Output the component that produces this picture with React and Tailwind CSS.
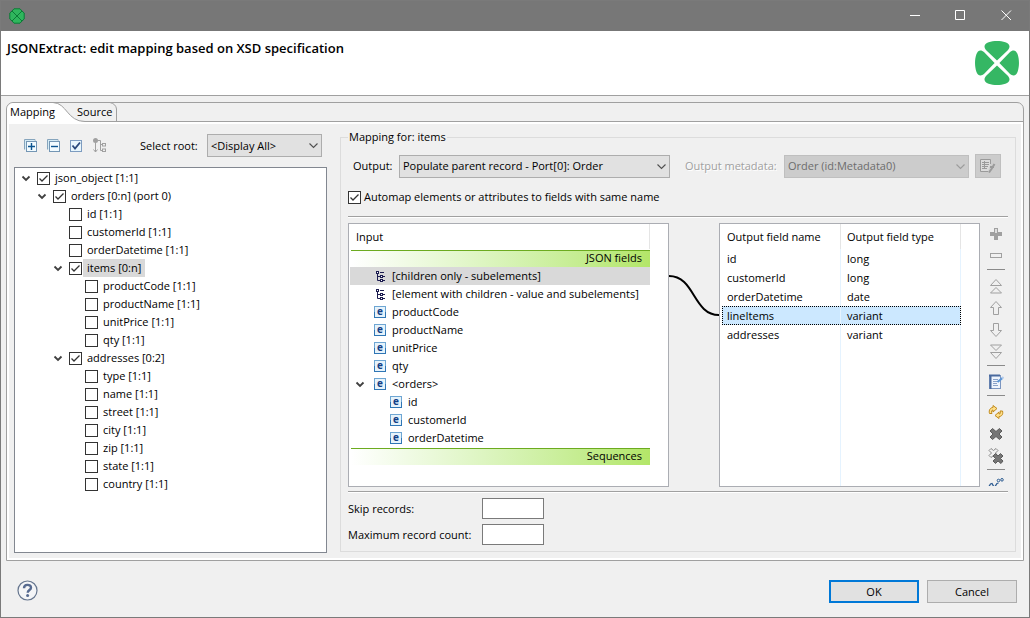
import React, { useState } from 'react';

const TREE = {
  label: 'json_object [1:1]',
  checked: true,
  children: [
    {
      label: 'orders [0:n] (port 0)',
      checked: true,
      children: [
        { label: 'id [1:1]' },
        { label: 'customerId [1:1]' },
        { label: 'orderDatetime [1:1]' },
        {
          label: 'items [0:n]',
          checked: true,
          selected: true,
          children: [
            { label: 'productCode [1:1]' },
            { label: 'productName [1:1]' },
            { label: 'unitPrice [1:1]' },
            { label: 'qty [1:1]' },
          ],
        },
        {
          label: 'addresses [0:2]',
          checked: true,
          children: [
            { label: 'type [1:1]' },
            { label: 'name [1:1]' },
            { label: 'street [1:1]' },
            { label: 'city [1:1]' },
            { label: 'zip [1:1]' },
            { label: 'state [1:1]' },
            { label: 'country [1:1]' },
          ],
        },
      ],
    },
  ],
};

const INPUT_FIELDS = [
  { label: '[children only - subelements]', icon: 'sub', selected: true },
  { label: '[element with children - value and subelements]', icon: 'sub' },
  { label: 'productCode' },
  { label: 'productName' },
  { label: 'unitPrice' },
  { label: 'qty' },
  { label: '<orders>', open: true },
  { label: 'id', nested: true },
  { label: 'customerId', nested: true },
  { label: 'orderDatetime', nested: true },
];

const OUTPUT_FIELDS = [
  { name: 'id', type: 'long' },
  { name: 'customerId', type: 'long' },
  { name: 'orderDatetime', type: 'date' },
  { name: 'lineItems', type: 'variant', selected: true },
  { name: 'addresses', type: 'variant' },
];

/* ---------- icons ---------- */

const PETAL = 'M22 19.6 L11.2 9.2 C8 5.6 9.6 2.6 13.6 1.3 C18.6 -0.4 25.4 -0.4 30.4 1.3 C34.4 2.6 36 5.6 32.8 9.2 Z';

function Clover() {
  return (
    <svg className="w-11 h-11 shrink-0" viewBox="0 0 44 44" fill="#35b764">
      {[0, 90, 180, 270].map((a) => (
        <path key={a} d={PETAL} transform={`rotate(${a} 22 22)`} />
      ))}
    </svg>
  );
}

function AppIcon() {
  return (
    <svg className="w-4 h-4" viewBox="0 0 16 16" fill="#2fb65d" stroke="#0b7a36">
      <path d="M5 .8h6l2 2.2 2.2 2v6l-2.2 2-2 2.2H5l-2-2.2-2.2-2V5L3 3z" strokeLinejoin="round" />
      <path d="M3 3l10 10M13 3L3 13" />
    </svg>
  );
}

function Arrow() {
  return (
    <svg className="w-[10px] h-[10px] shrink-0" viewBox="0 0 10 10" fill="none" stroke="#404040" strokeWidth="1.8">
      <path d="M1.5 3.500l3.500 3.500 3.500-3.500" />
    </svg>
  );
}

function ElementIcon() {
  return (
    <svg className="w-3 h-3 shrink-0 overflow-visible" viewBox="0 0 12 12">
      <rect x=".5" y=".5" width="11" height="11" fill="#e6f3fb" stroke="#2f76b5" />
      <path d="M0 .5h12M.5 0v6M11.5 0v6" stroke="#6ea6d3" />
      <text x="6" y="9" textAnchor="middle" fontSize="10" fontWeight="700" fill="#123f86">e</text>
    </svg>
  );
}

function SubelementsIcon() {
  return (
    <svg className="w-3 h-3 shrink-0" viewBox="0 0 12 12" fill="none" stroke="#1c1c50">
      <path d="M6 2.5h4M3.5 4v6.500h3M3.500 6.500h3M9 6.500h2M9 10.500h2" />
      <rect x="2.500" y="1.500" width="2" height="2" fill="#fff" />
      <rect x="6.500" y="5.500" width="2" height="2" fill="#fff" />
      <rect x="6.500" y="9.500" width="2" height="2" fill="#fff" />
    </svg>
  );
}

function BoxesIcon({ minus }) {
  return (
    <svg className="w-[14px] h-[14px]" viewBox="0 0 14 14" fill="none">
      <path d="M.5 10.500V.5h10.500v2" stroke="#86a5bd" />
      <path d="M1 1h9.500v1.500h-8v8H1z" fill="#d5ebf5" />
      <rect x="2.500" y="2.500" width="10" height="10" fill="#f2fbff" stroke="#7496b4" />
      <path d={minus ? 'M4 7.5h7' : 'M4 7.5h7M7.5 4v7'} stroke="#0c5490" strokeWidth="1.4" />
    </svg>
  );
}

function CheckAllIcon() {
  return (
    <svg className="w-[14px] h-[14px]" viewBox="0 0 14 14" fill="none">
      <rect x=".5" y="1.5" width="11" height="11" fill="#e8f6fd" stroke="#7d9cc0" />
      <path d="M2.500 6.500l2.500 3 5-6" stroke="#2b4a7c" strokeWidth="1.8" />
    </svg>
  );
}

function TreeModeIcon() {
  return (
    <svg className="w-[15px] h-[15px]" viewBox="0 0 15 15" fill="none" stroke="#a0a0a0">
      <circle cx="2.5" cy="2.500" r="2.500" fill="#a0a0a0" stroke="none" />
      <path d="M2.500 3v11M.5 11.500l2 2.500 2-2.500M5 2.500h2.500v10h2M7.500 6.500h2" />
      <rect x="9.500" y="5.500" width="3" height="2.500" />
      <rect x="9.500" y="11" width="3" height="2.500" />
    </svg>
  );
}

function EditMetadataIcon() {
  return (
    <svg className="w-4 h-4" viewBox="0 0 16 16" fill="none" stroke="#9a9a9a">
      <path d="M8 13.5H.5V1.500h10V6" fill="#dcdcdc" />
      <path d="M2 4.500h7M2 6.500h7M2 8.500h6M2 10.500h5M4.500 3v8" />
      <path d="M14.500 6l-3 5-2.500 3.500M10 9h4" strokeWidth="2" />
    </svg>
  );
}

const TOOL_ICONS = {
  add: (
    <>
      <path d="M6 6V2h4v4h4v4h-4v4H6v-4H2V6z" fill="#a0a0a0" stroke="none" />
      <path d="M7 3h2v4H7z" fill="#dedede" stroke="none" />
    </>
  ),
  remove: <rect x="2.500" y="5.500" width="11" height="4" />,
  top: <path d="M8 1.500l5.500 6h-11zM8 9.500l5.500 5.500h-11z" />,
  up: <path d="M8 1.500l5.500 6h-3v7h-5v-7h-3z" />,
  down: <path d="M8 14.500l5.500-6h-3v-7h-5v7h-3z" />,
  bottom: <path d="M8 6.500L13.500 1h-11zM8 14.500l5.500-6h-11z" />,
  edit: (
    <>
      <rect x="1.500" y="1.500" width="11" height="13" fill="#eef4fc" stroke="#7c96c0" />
      <path d="M1 1.500h11M2.500 2v13" stroke="#4a6a9e" strokeWidth="2" />
      <path d="M5 5.500h5M5 7.500h5M5 9.500h4M5 11.500h5" stroke="#8aa2c8" />
      <path d="M9.500 8l5-4" stroke="#5b95d6" strokeWidth="2.2" />
      <path d="M14 3l1.500 1.500" stroke="#b4cbea" strokeWidth="2" />
    </>
  ),
  swap: (
    <>
      <path d="M1.500 9.500C.5 6 2.500 3.500 5 3.500v-2l4 3-4 3.500V6C3.500 6 3.200 7.500 4 9.500z" fill="#ffe08a" stroke="#c08a1c" />
      <path d="M14.500 7c1 3.500-1 5.500-3.500 5.500v2L7 11.500 11 8v2c1.500 0 1.800-1.200 1-3z" fill="#ffe08a" stroke="#c08a1c" />
    </>
  ),
  cross: (
    <path d="M4.500 2.500L8 5.500l3.500-3 2.500 2.500L11 8l3 3-2.500 2.500L8 10.500l-3.500 3L2 11l3-3-3-3z" fill="#757575" stroke="#5c5c5c" />
  ),
  crossAll: (
    <>
      <path d="M3 .5l2.500 2L8 .5l2 2L7.500 5l2 2.500-2 2-2-2-2.500 2-2-2L3.500 5 1 2.500z" fill="#f0f0f0" stroke="#8a8a8a" />
      <path d="M7.500 5.500L10 8l2.500-2.500L15 8l-2.500 2.500L15 13l-2 2.500-3-2.500-2.500 2.500L5 13l2.500-2.500L5 8z" fill="#757575" stroke="#5c5c5c" />
    </>
  ),
  wave: (
    <>
      <path d="M1 8.500l1.500-2.500L4 5.500l2 3.500M7 8.500l2-3 1.500-.5" stroke="#2d5c92" strokeWidth="1.3" />
      <circle cx="10.500" cy="2.500" r="1.300" stroke="#2d5c92" />
      <circle cx="14" cy="1.800" r="1.300" stroke="#2d5c92" />
    </>
  ),
};

/* ---------- small controls ---------- */

function Checkbox({ id, defaultChecked }) {
  return (
    <span className="grid shrink-0 w-[13px] h-[13px]">
      <input
        id={id} type="checkbox" defaultChecked={defaultChecked}
        className="peer appearance-none col-start-1 row-start-1 w-[13px] h-[13px] border border-[#333] bg-white"
      />
      <svg
        className="hidden peer-checked:block pointer-events-none col-start-1 row-start-1 w-[13px] h-[13px]"
        viewBox="0 0 13 13" fill="none" stroke="#333" strokeWidth="1.3"
      >
        <path d="M2.500 6.500l2.500 2.500 5.500-5.500" />
      </svg>
    </span>
  );
}

function Select({ id, option, disabled, className }) {
  const look = disabled ? 'bg-[#cccccc] border-[#bfbfbf] text-[#6d6d6d]' : 'bg-[#e1e1e1] border-[#adadad] text-black';
  return (
    <span className={`grid min-w-0 ${className}`}>
      <select
        id={id} disabled={disabled}
        className={`appearance-none col-start-1 row-start-1 w-full h-[23px] pl-[3px] pr-5 border opacity-100 ${look}`}
      >
        <option>{option}</option>
      </select>
      <svg
        className="col-start-1 row-start-1 self-center justify-self-end mr-1 w-[9px] h-[9px] pointer-events-none"
        viewBox="0 0 9 9" fill="none" stroke={disabled ? '#9c9c9c' : '#505050'} strokeWidth="1.1"
      >
        <path d="M.5 2.500l4 4 4-4" />
      </svg>
    </span>
  );
}

function TreeNode({ node, path }) {
  const id = `node-${path}`;
  return (
    <li>
      <div className="flex items-center h-[18px]">
        <span className="w-4 shrink-0">{node.children && <Arrow />}</span>
        <Checkbox id={id} defaultChecked={node.checked} />
        <label htmlFor={id} className={`ml-px px-1 h-[18px] leading-[18px] whitespace-nowrap ${node.selected ? 'bg-[#d9d9d9]' : ''}`}>
          {node.label}
        </label>
      </div>
      {node.children && (
        <ul className="pl-4">
          {node.children.map((c, i) => (
            <TreeNode key={c.label} node={c} path={`${path}-${i}`} />
          ))}
        </ul>
      )}
    </li>
  );
}

function ToolButton({ name, label, className = 'h-[22px] items-center' }) {
  return (
    <button type="button" aria-label={label} className={`flex justify-center w-full overflow-hidden ${className}`}>
      <svg className="w-4 h-4 shrink-0" viewBox="0 0 16 16" fill="none" stroke="#a0a0a0">
        {TOOL_ICONS[name]}
      </svg>
    </button>
  );
}

function ToolSeparator() {
  return <div className="h-2 pt-[2px]"><div className="h-px bg-[#8a8a8a]" /></div>;
}

function Separator() {
  return <div className="h-[2px] bg-white border-t border-[#a0a0a0]" />;
}

function SectionRow({ children }) {
  return (
    <div className="h-[18px] pt-px pl-px">
      <div className="h-px bg-[#6cab1f]" />
      <div className="h-4 bg-linear-to-r from-white to-[#b3e668] pr-2 text-right leading-[14px]">
        {children}
      </div>
    </div>
  );
}

/* ---------- panels ---------- */

function TitleBar() {
  return (
    <div className="flex items-center justify-between h-[30px] pl-2 bg-[#777777]">
      <AppIcon />
      <div className="flex h-full pb-px">
        <button type="button" aria-label="Minimize" className="w-[46px] flex items-center justify-center">
          <svg className="w-[11px] h-[11px]" viewBox="0 0 11 11" stroke="#fff"><path d="M0 5.500h10" /></svg>
        </button>
        <button type="button" aria-label="Maximize" className="w-[45px] flex items-center justify-center">
          <svg className="w-[11px] h-[11px]" viewBox="0 0 11 11" fill="none" stroke="#fff"><path d="M.5 .5h9v9h-9z" /></svg>
        </button>
        <button type="button" aria-label="Close" className="w-[46px] flex items-center justify-center">
          <svg className="w-[11px] h-[11px]" viewBox="0 0 11 11" stroke="#fff"><path d="M.5 .5l9.500 9.500M10 .5L.5 10" /></svg>
        </button>
      </div>
    </div>
  );
}

function TabBar({ tab, setTab }) {
  return (
    <div role="tablist" className="relative flex h-[19px] border-b border-[#a0a0a0]">
      <svg className="absolute left-0 top-0 w-[112px] h-[19px]" viewBox="0 0 112 19" fill="none">
        <path d="M0 19V6Q1 1 6 0H46C60 0 60 18.500 78 18.500V19z" fill="#fff" />
        <path d="M46 -.5C60 0 60 18.500 78 18.500M103 -.5Q109 1 109.500 6V18.500" stroke="#a0a0a0" />
      </svg>
      <button type="button" role="tab" aria-selected={tab === 'mapping'} onClick={() => setTab('mapping')} className="relative w-[67px] pl-[3px] text-left">
        Mapping
      </button>
      <button type="button" role="tab" aria-selected={tab === 'source'} onClick={() => setTab('source')} className="relative pl-[3px] text-left">
        Source
      </button>
    </div>
  );
}

function TreePanel() {
  return (
    <div className="flex flex-col grow basis-[313px] min-w-0 pt-[10px]">
      <div className="flex items-center mb-[10px] pl-[10px] pr-[5px]">
        <div className="flex items-center gap-[9px]">
          <button type="button" aria-label="Expand all"><BoxesIcon /></button>
          <button type="button" aria-label="Collapse all"><BoxesIcon minus /></button>
          <button type="button" aria-label="Check all"><CheckAllIcon /></button>
          <button type="button" aria-label="Tree mode"><TreeModeIcon /></button>
        </div>
        <label htmlFor="root" className="ml-auto mr-2 w-[59px] whitespace-nowrap">Select root:</label>
        <Select id="root" option="<Display All>" className="w-[115px]" />
      </div>
      <div className="grow bg-white border border-[#828790] pt-px pl-[6px]">
        <ul><TreeNode node={TREE} path="0" /></ul>
      </div>
    </div>
  );
}

function InputBox() {
  return (
    <div className="grow basis-[321px] min-w-0 bg-white border border-[#abadb3] pr-[18px] pl-px">
      <div className="flex h-[25px] items-center pl-[6px] border-r border-[#e5e5e5]">Input</div>
      <SectionRow>JSON fields</SectionRow>
      <ul>
        {INPUT_FIELDS.map((f) => (
          <li key={f.label} className={`flex items-center h-[18px] whitespace-nowrap ${f.nested ? 'pl-[21px]' : 'pl-[5px]'} ${f.selected ? 'bg-[#d9d9d9]' : ''}`}>
            <span className="w-[19px] shrink-0">{f.open && <Arrow />}</span>
            {f.icon === 'sub' ? <SubelementsIcon /> : <ElementIcon />}
            <span className="ml-[6px]">{f.label}</span>
          </li>
        ))}
      </ul>
      <SectionRow>Sequences</SectionRow>
    </div>
  );
}

function OutputTable() {
  return (
    <div className="flex grow basis-[261px] min-w-0 bg-white border border-[#abadb3]">
      <table className="w-full table-fixed border-separate border-spacing-0 text-left">
        <colgroup><col className="w-[121px]" /><col className="w-[120px]" /><col /></colgroup>
        <thead>
          <tr className="h-[25px]">
            <th className="p-0 pl-[7px] font-normal border-r border-[#e5e5e5] whitespace-nowrap">Output field name</th>
            <th className="p-0 pl-[6px] font-normal border-r border-[#e5e5e5] whitespace-nowrap">Output field type</th>
            <td />
          </tr>
        </thead>
        <tbody>
          {OUTPUT_FIELDS.map((f) => {
            const dots = f.selected ? 'bg-[#cce8ff] outline-dotted outline-1 -outline-offset-1 outline-black' : '';
            return (
              <tr key={f.name} className="h-[19px]">
                <td colSpan={2} className="p-0">
                  <div className={`ml-[2px] flex h-[19px] items-center leading-5 ${dots}`}>
                    <span className="w-[118px] h-full pl-[5px] shrink-0">{f.name}</span>
                    <span className="h-full grow pl-[6px] border-l border-r border-[#e5f3ff]">{f.type}</span>
                  </div>
                </td>
                <td />
              </tr>
            );
          })}
          <tr>
            <td className="p-0 border-r border-[#e5f3ff]" />
            <td className="p-0 border-r border-[#e5f3ff]" />
            <td />
          </tr>
        </tbody>
      </table>
    </div>
  );
}

function MappingToolbar() {
  return (
    <div className="w-[18px] ml-[7px] mr-[3px] shrink-0">
      <ToolButton name="add" label="Add field" />
      <ToolButton name="remove" label="Remove field" />
      <ToolSeparator />
      <ToolButton name="top" label="Move to top" />
      <ToolButton name="up" label="Move up" />
      <ToolButton name="down" label="Move down" />
      <ToolButton name="bottom" label="Move to bottom" />
      <ToolSeparator />
      <ToolButton name="edit" label="Edit metadata" />
      <ToolSeparator />
      <ToolButton name="swap" label="Automap" />
      <ToolButton name="cross" label="Delete mapping" />
      <ToolButton name="crossAll" label="Delete all mappings" />
      <ToolSeparator />
      <ToolButton name="wave" label="Toggle lines" className="h-[11px] items-start pt-[3px]" />
    </div>
  );
}

function MappingPanel() {
  return (
    <fieldset className="flex flex-col grow basis-[676px] min-w-0 mt-[5px] mb-px px-[7px] border border-[#dcdcdc]">
      <legend className="h-4 leading-4 px-px">Mapping for: items</legend>
      <div className="flex items-center pt-[9px] pl-[5px] pr-[7px] whitespace-nowrap">
        <label htmlFor="output" className="w-[46px] shrink-0">Output:</label>
        <Select id="output" option="Populate parent record - Port[0]: Order" className="grow basis-[271px]" />
        <label htmlFor="metadata" className="ml-[15px] w-[99px] shrink-0 text-[#a0a0a0] text-shadow-[1px_1px_0_#fff]">Output metadata:</label>
        <Select id="metadata" option="Order (id:Metadata0)" disabled className="grow basis-[185px]" />
        <button type="button" disabled aria-label="Edit output metadata" className="ml-[6px] w-[26px] h-6 shrink-0 flex items-center justify-center bg-[#cccccc] border border-[#bfbfbf]">
          <EditMetadataIcon />
        </button>
      </div>
      <div className="flex items-center gap-[3px] h-[38px]">
        <Checkbox id="automap" defaultChecked />
        <label htmlFor="automap">Automap elements or attributes to fields with same name</label>
      </div>
      <Separator />
      <div className="flex grow mt-[5px] mb-1">
        <InputBox />
        <svg className="w-[50px] shrink-0" fill="none" stroke="#000" strokeWidth="2">
          <path d="M0 53C26 53 24 92 50 92" />
        </svg>
        <OutputTable />
        <MappingToolbar />
      </div>
      <Separator />
      <div className="grid grid-cols-[134px_62px] items-center gap-y-[5px] pt-[5px] pb-[6px] whitespace-nowrap">
        <label htmlFor="skip">Skip records:</label>
        <input id="skip" type="text" className="h-[21px] px-1 bg-white border border-[#7a7a7a]" />
        <label htmlFor="max">Maximum record count:</label>
        <input id="max" type="text" className="h-[21px] px-1 bg-white border border-[#7a7a7a]" />
      </div>
    </fieldset>
  );
}

function Footer() {
  return (
    <div className="flex items-start justify-between pt-[19px] pb-[14px] pl-4 pr-3">
      <button type="button" aria-label="Help">
        <svg className="w-[21px] h-[21px]" viewBox="0 0 21 21" fill="none">
          <circle cx="10.500" cy="10.500" r="9.500" fill="#f4f5f7" stroke="#66768f" strokeWidth="1.2" />
          <path d="M7 8.200C7 3.800 14 3.800 14 7.700c0 2.300-3.300 2.400-3.300 5" stroke="#566a90" strokeWidth="2.4" />
          <circle cx="10.600" cy="15.600" r="1.500" fill="#566a90" />
        </svg>
      </button>
      <div className="flex gap-2">
        <button type="button" className="w-[90px] h-[23px] bg-[#e1e1e1] border-2 border-[#0078d7]">OK</button>
        <button type="button" className="w-[90px] h-[23px] bg-[#e1e1e1] border border-[#adadad]">Cancel</button>
      </div>
    </div>
  );
}

export default function App() {
  const [tab, setTab] = useState('mapping');

  return (
    <div className='flex flex-col min-h-screen bg-[#f0f0f0] border border-[#7a7a7a] text-black text-[11px] leading-4 font-["Open_Sans",sans-serif]'>
      <TitleBar />
      <header className="flex justify-between h-[65px] pl-[6px] pr-[10px] pt-[10px] bg-white border-b border-[#a0a0a0]">
        <h1 className="text-[13px] leading-[14px] font-semibold">JSONExtract: edit mapping based on XSD specification</h1>
        <Clover />
      </header>
      <main className="flex flex-col grow mt-[6px] mx-[5px] border border-[#a0a0a0] rounded-t-[7px]">
        <TabBar tab={tab} setTab={setTab} />
        <div className="flex grow gap-[13px] border-2 border-white px-[5px] pb-[5px]">
          <TreePanel />
          <MappingPanel />
        </div>
      </main>
      <Footer />
    </div>
  );
}
